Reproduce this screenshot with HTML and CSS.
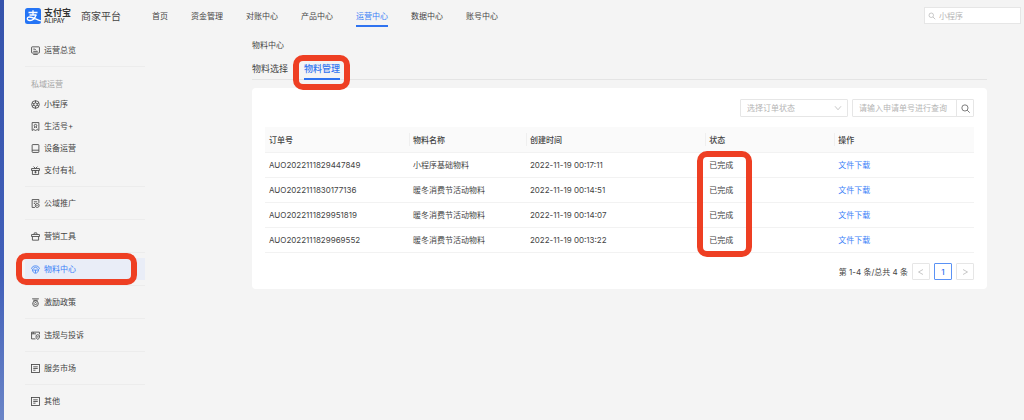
FILE: index.html
```html
<!DOCTYPE html>
<html lang="zh-CN">
<head>
<meta charset="utf-8">
<meta name="viewport" content="width=device-width, initial-scale=1">
<title>商家平台 - 物料中心</title>
<link rel="stylesheet" href="styles.css">
</head>
<body>
<header class="topbar">
  <a class="brand" href="#">
    <svg class="brand-mark" viewBox="0 0 32 32" aria-hidden="true">
      <rect width="32" height="32" rx="5" fill="#2474f5"/>
      <g fill="none" stroke="#fff" stroke-width="2.600">
        <path d="M7 9h18M16 4.500V14M9 14h14"/>
        <path d="M22 14c-2 6-6 11-12 11-7 0-7-7-1-7 7 0 13 5 23 8"/>
      </g>
    </svg>
    <span class="brand-text"><span class="brand-cn">支付宝</span><span class="brand-en">ALIPAY</span></span>
    <span class="brand-title">商家平台</span>
  </a>
  <nav class="topnav">
    <a href="#">首页</a>
    <a href="#">资金管理</a>
    <a href="#">对账中心</a>
    <a href="#">产品中心</a>
    <a class="is-active" href="#">运营中心</a>
    <a href="#">数据中心</a>
    <a href="#">账号中心</a>
  </nav>
  <label class="topsearch">
    <svg class="icon" viewBox="0 0 16 16" aria-hidden="true"><circle cx="6.500" cy="6.500" r="4.500"/><path d="M10 10l4.500 4.500"/></svg>
    <input type="text" placeholder="小程序" aria-label="搜索">
  </label>
</header>

<div class="layout">
  <nav class="sidebar">
    <a class="item" href="#"><svg class="icon" viewBox="0 0 16 16" aria-hidden="true"><rect x="1" y="1.500" width="14" height="11" rx="1"/><path d="M4 15h8M4 5.500h3l2 2M4 9.500h8"/></svg>运营总览</a>
    <hr>
    <h2 class="group">私域运营</h2>
    <a class="item" href="#"><svg class="icon" viewBox="0 0 16 16" aria-hidden="true"><circle cx="8" cy="8" r="6.800"/><path d="M8 5l3 1.500v3L8 11 5 9.500v-3zM8 1v4M14 5l-3 1.500M14 11l-3-1.500M8 15v-4M2 11l3-1.500M2 5l3 1.500"/></svg>小程序</a>
    <a class="item" href="#"><svg class="icon" viewBox="0 0 16 16" aria-hidden="true"><path d="M2 1h12v14l-3-1.500L8 15l-3-1.500L2 15z"/><circle cx="8" cy="6.500" r="2.300"/><path d="M5 11l2-2M11 11L9 9"/></svg>生活号+</a>
    <a class="item" href="#"><svg class="icon" viewBox="0 0 16 16" aria-hidden="true"><rect x="2" y="1" width="12" height="14" rx="1"/><path d="M2 11h12"/></svg>设备运营</a>
    <a class="item" href="#"><svg class="icon" viewBox="0 0 16 16" aria-hidden="true"><path d="M1 4.500h14V8H1zM2.500 8v7h11V8M4.500 1L8 4.500 11.500 1M6 7l2 2.500L10 7M8 9.500V13M6 11h4"/></svg>支付有礼</a>
    <hr>
    <a class="item" href="#"><svg class="icon" viewBox="0 0 16 16" aria-hidden="true"><path d="M7 15H2V1h12v6M5 5h6M5 8h2"/><circle cx="11" cy="11.500" r="3.500"/><path d="M9.500 12l1.500-1.500 1.500 1.500"/></svg>公域推广</a>
    <hr>
    <a class="item" href="#"><svg class="icon" viewBox="0 0 16 16" aria-hidden="true"><path d="M1 4.500h14V8H1zM2.500 8v6.500h11V8M5 4.500L6 1.500h4l1 3"/></svg>营销工具</a>
    <hr>
    <a class="item is-active" href="#"><svg class="icon" viewBox="0 0 16 16" aria-hidden="true"><path d="M1 6c1-3 4-4.500 7-4.500S14 3 15 6l-3 3H4zM2.500 8.500C3 12 5 14.500 8 14.500s5-2.500 5.500-6M8 9v5M4 6l4-2 4 2"/></svg>物料中心<span class="mark"></span></a>
    <hr>
    <a class="item" href="#"><svg class="icon" viewBox="0 0 16 16" aria-hidden="true"><path d="M2 1.500h12M4 4h8"/><circle cx="8" cy="10" r="5"/><path d="M8 7.500l2.500 2.500L8 12.500 5.500 10z"/></svg>激励政策</a>
    <hr>
    <a class="item" href="#"><svg class="icon" viewBox="0 0 16 16" aria-hidden="true"><path d="M8 14H1V2h14v4M1 5h8M4 2v3"/><path d="M9 8l3-1.500L15 8v3c0 2-1.500 3-3 3.800C10.500 14 9 13 9 11zM10.500 10.500h3"/></svg>违规与投诉</a>
    <hr>
    <a class="item" href="#"><svg class="icon" viewBox="0 0 16 16" aria-hidden="true"><rect x="1" y="1" width="14" height="14"/><path d="M4 5h8M4 8h8M4 11h4"/></svg>服务市场</a>
    <hr>
    <a class="item" href="#"><svg class="icon" viewBox="0 0 16 16" aria-hidden="true"><rect x="1" y="1" width="14" height="14"/><path d="M4 5h8M4 8h8M4 11h4"/></svg>其他</a>
  </nav>

  <main class="main">
    <h1 class="page-title">物料中心</h1>
    <div class="tabs" role="tablist">
      <button class="tab" type="button" role="tab" aria-selected="false">物料选择</button>
      <button class="tab is-active" type="button" role="tab" aria-selected="true">物料管理<span class="mark"></span></button>
    </div>
    <section class="card">
      <form class="filters">
        <span class="select">
          <select aria-label="订单状态"><option>选择订单状态</option><option>已完成</option></select>
          <svg class="icon" viewBox="0 0 16 16" aria-hidden="true"><path d="M2 4.500l6 7 6-7"/></svg>
        </span>
        <span class="query">
          <input type="text" placeholder="请输入申请单号进行查询" aria-label="申请单号">
          <button type="button" aria-label="查询"><svg class="icon" viewBox="0 0 16 16" aria-hidden="true"><circle cx="7" cy="7" r="5.500"/><path d="M11 11l4.500 4.500"/></svg></button>
        </span>
      </form>
      <table class="orders">
        <colgroup><col class="c-id"><col class="c-name"><col class="c-time"><col class="c-state"><col class="c-action"></colgroup>
        <thead><tr><th>订单号</th><th>物料名称</th><th>创建时间</th><th>状态</th><th>操作</th></tr></thead>
        <tbody>
          <tr><td>AUO2022111829447849</td><td>小程序基础物料</td><td>2022-11-19 00:17:11</td><td class="marked">已完成<span class="mark"></span></td><td><a href="#">文件下载</a></td></tr>
          <tr><td>AUO2022111830177136</td><td>暖冬消费节活动物料</td><td>2022-11-19 00:14:51</td><td>已完成</td><td><a href="#">文件下载</a></td></tr>
          <tr><td>AUO2022111829951819</td><td>暖冬消费节活动物料</td><td>2022-11-19 00:14:07</td><td>已完成</td><td><a href="#">文件下载</a></td></tr>
          <tr><td>AUO2022111829969552</td><td>暖冬消费节活动物料</td><td>2022-11-19 00:13:22</td><td>已完成</td><td><a href="#">文件下载</a></td></tr>
        </tbody>
      </table>
      <div class="pager">
        <span>第 1-4 条/总共 4 条</span>
        <button type="button" aria-label="上一页" disabled><svg class="icon" viewBox="0 0 16 16" aria-hidden="true"><path d="M12 3L3 8l9 5"/></svg></button>
        <button class="is-active" type="button" aria-current="page">1</button>
        <button type="button" aria-label="下一页" disabled><svg class="icon" viewBox="0 0 16 16" aria-hidden="true"><path d="M4 3l9 5-9 5"/></svg></button>
      </div>
    </section>
  </main>
</div>
</body>
</html>
```

FILE: styles.css
```css
* { box-sizing: border-box; }

body {
  margin: 0;
  min-height: 100vh;
  padding-left: 4px;
  background: linear-gradient(#3553ab, #415fb9 65%, #6a85c7) left top / 4px 100% no-repeat #f4f4f4;
  color: #444;
  font: 8px/12px Inter, "Noto Sans CJK SC", sans-serif;
}

a { color: inherit; text-decoration: none; }
button, input, select { margin: 0; font: inherit; color: inherit; }
input::placeholder { color: #b5b5b5; opacity: 1; }

.icon {
  width: 8px;
  height: 8px;
  flex: none;
  fill: none;
  stroke: currentColor;
  stroke-width: 1.5;
}

.mark {
  position: absolute;
  border: 6px solid #ee3f23;
  border-radius: 10px;
  pointer-events: none;
}

/* Top bar */
.topbar {
  display: flex;
  align-items: center;
  height: 31px;
  padding: 0 3px 0 21px;
}
.brand { display: flex; align-items: center; width: 127px; }
.brand-mark { width: 16px; height: 16px; }
.brand-text { display: flex; flex-direction: column; width: 40px; padding-left: 3px; color: #333; }
.brand-cn { font-size: 9px; line-height: 10px; font-weight: 700; }
.brand-en { font-size: 6px; line-height: 6px; font-weight: 500; }
.brand-title { font-size: 10px; }
.topnav { display: flex; gap: 23px; flex: 1; }
.topnav a { padding: 5px 0 2px; border-bottom: 2px solid transparent; line-height: 14px; white-space: nowrap; }
.topnav .is-active { color: #3a80f7; border-color: #2f73f0; }
.topsearch {
  display: flex;
  align-items: center;
  gap: 3px;
  width: 97px;
  height: 17px;
  padding: 0 3px;
  border: 1px solid #e6e6e6;
  background: #fff;
  color: #b5b5b5;
}
.topsearch input { width: 100%; min-width: 0; padding: 0; border: 0; background: none; }

.layout { display: flex; gap: 107px; padding: 0 37px 0 21px; }

/* Side menu */
.sidebar { width: 120px; flex: none; padding-top: 8px; }
.sidebar hr { height: 1px; margin: 5px 0; border: 0; background: #ececec; }
.item { position: relative; display: flex; align-items: center; gap: 4px; height: 22px; padding-left: 6px; }
.item .icon { width: 9px; height: 9px; }
.item.is-active { background: #e9edf7; color: #3a80f7; }
.item .mark { inset: -5px 8px -5px -9px; }
.group { height: 21px; margin: 0; padding: 6px 0 0 6px; color: #a6a6a6; font-size: 8px; font-weight: 400; }

/* Content */
.main { flex: 1; min-width: 0; padding-top: 8px; }
.page-title { margin: 0; font-size: 8px; font-weight: 400; }
.tabs { display: flex; gap: 16px; height: 21px; margin: 8px 0; border-bottom: 1px solid #e4e4e4; }
.tab {
  position: relative;
  height: 21px;
  padding: 0;
  border: 0;
  border-bottom: 2px solid transparent;
  background: none;
  font-size: 9px;
}
.tab.is-active { border-color: #2f73f0; color: #2f73f0; font-weight: 500; }
.tab .mark { inset: -4px -10px -12px -11px; }

.card { padding: 11px 13px 9px; border-radius: 4px; background: #fff; }
.filters { display: flex; justify-content: flex-end; gap: 4px; margin: 0 0 10px; }
.select { display: flex; align-items: center; width: 108px; height: 18px; padding-right: 5px; border: 1px solid #e6e6e6; border-radius: 1px; color: #b5b5b5; }
.select select { flex: 1; min-width: 0; padding: 0 6px; border: 0; background: none; appearance: none; }
.query { display: flex; width: 122px; height: 18px; border: 1px solid #e6e6e6; border-radius: 1px; }
.query input { flex: 1; min-width: 0; padding: 0 6px; border: 0; background: none; }
.query button { display: grid; place-items: center; width: 17px; padding: 0; border: 0; border-left: 1px solid #e6e6e6; background: none; color: #666; }

.orders { width: 100%; border-collapse: separate; border-spacing: 0; table-layout: fixed; }
.orders th, .orders td { height: 25px; padding: 0 4px; border-bottom: 1px solid #f2f2f2; text-align: left; white-space: nowrap; }
.orders th { height: 26px; background: #fafafa; color: #444; font-weight: 500; }
.orders th + th { background: linear-gradient(#efefef, #efefef) left center / 1px 13px no-repeat #fafafa; }
.orders a { color: #3a80f7; }
.c-id { width: 20.3%; }
.c-name { width: 16.5%; }
.c-time { width: 25.3%; }
.c-state { width: 18.2%; }
.c-action { width: 19.7%; }
.marked { position: relative; }
.marked .mark { top: -2px; left: -8px; width: 55px; height: 106px; }

.pager { display: flex; align-items: center; justify-content: flex-end; gap: 4px; margin-top: 10px; }
.pager button { display: grid; place-items: center; width: 18px; height: 17px; padding: 0; border: 1px solid #e6e6e6; border-radius: 1px; background: #fff; color: #b5b5b5; }
.pager .is-active { border-color: #5a92f5; color: #2f73f0; font-weight: 500; }
.query .icon { width: 9px; height: 9px; }
```
